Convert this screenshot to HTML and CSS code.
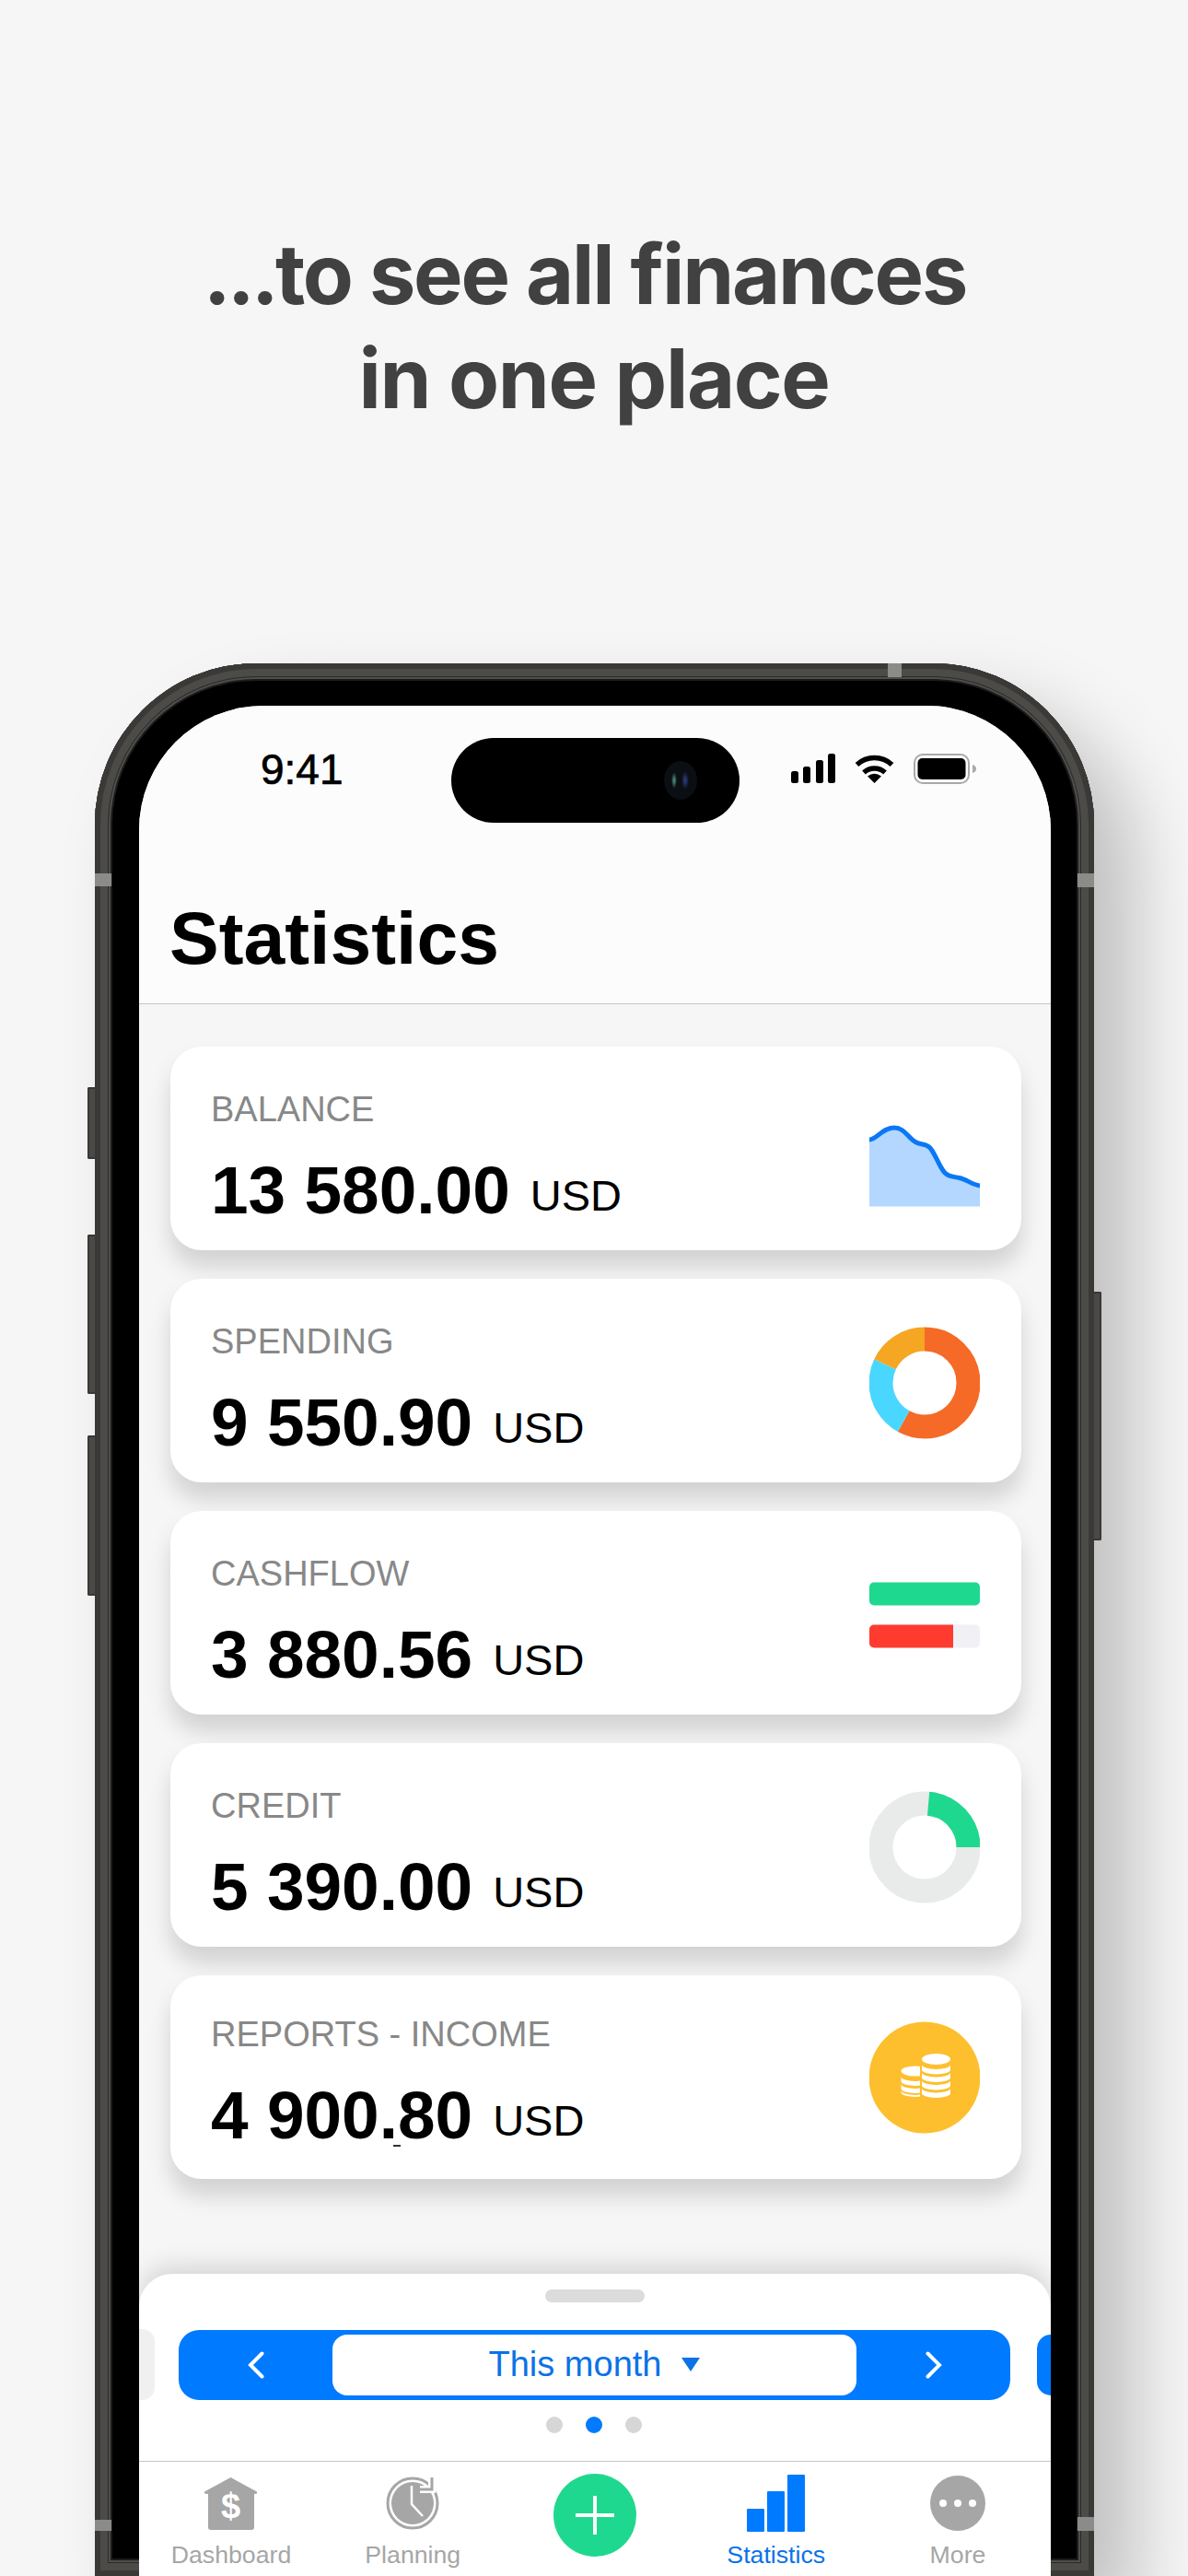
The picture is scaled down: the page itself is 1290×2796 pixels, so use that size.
FILE: index.html
```html
<!DOCTYPE html>
<html lang="en">
<head>
    <meta charset="UTF-8">
    <meta name="viewport" content="width=device-width, initial-scale=1.0">
    <title>Statistics</title>
    <link rel="stylesheet" href="styles.css">
</head>
<body>
    <h1 class="headline">
        <span class="line-one"><span class="lead-dots">...</span>to see all finances</span>
        <span class="line-two">in one place</span>
    </h1>

    <div class="phone">
        <span class="side-btn side-mute"></span>
        <span class="side-btn side-up"></span>
        <span class="side-btn side-down"></span>
        <span class="side-btn side-power"></span>
        <span class="mark mark-top"></span>
        <span class="mark mark-left"></span>
        <span class="mark mark-right"></span>
        <span class="mark mark-left-low"></span>
        <span class="mark mark-right-low"></span>

        <div class="screen">
            <div class="island"><span class="camera"></span></div>

            <header class="top">
                <div class="status">
                    <span class="time">9:41</span>
                    <div class="status-icons">
                        <svg width="48" height="32" viewBox="0 0 48 32">
                            <rect x="0" y="19" width="8" height="13" rx="2.5"/>
                            <rect x="13" y="14" width="8" height="18" rx="2.5"/>
                            <rect x="27" y="7" width="8" height="25" rx="2.5"/>
                            <rect x="40" y="0" width="8" height="32" rx="2.5"/>
                        </svg>
                        <svg width="43" height="32" viewBox="0 0 43 32">
                            <path class="wifi-arc" d="M2.500 12A28 28 0 0 1 40.500 12"/>
                            <path class="wifi-arc" d="M10 20.500A17 17 0 0 1 33 20.500"/>
                            <path d="M21.500 32L14 24.500Q21.500 19 29 24.500Z"/>
                        </svg>
                        <svg width="68" height="33" viewBox="0 0 68 33">
                            <rect class="batt-shell" x="1" y="1" width="59" height="31" rx="9"/>
                            <rect x="4.500" y="5" width="52" height="23" rx="5"/>
                            <path class="batt-nub" d="M64 12q4 1 4 4.500t-4 4.500z"/>
                        </svg>
                    </div>
                </div>
                <h2 class="title">Statistics</h2>
            </header>

            <main class="cards">
                <section class="card">
                    <div class="card-text">
                        <div class="card-label">BALANCE</div>
                        <div class="card-value">13 580.00<span class="cur">USD</span></div>
                    </div>
                    <svg class="card-icon" viewBox="0 0 120 128">
                        <path class="area" d="M0 54C8 54 14 41 27 41C38 41 42 52 50 56.500C56 60 62 58 66 63C72 70 76 84 82 90C87 95 92 94 98 95.500C105 97 112 103 120 104V126.500H0Z"/>
                        <path class="area-line" d="M0 54C8 54 14 41 27 41C38 41 42 52 50 56.500C56 60 62 58 66 63C72 70 76 84 82 90C87 95 92 94 98 95.500C105 97 112 103 120 104"/>
                    </svg>
                </section>

                <section class="card">
                    <div class="card-text">
                        <div class="card-label">SPENDING</div>
                        <div class="card-value">9 550.90<span class="cur">USD</span></div>
                    </div>
                    <svg class="card-icon" viewBox="0 0 120 128">
                        <g transform="rotate(-90 60 66)">
                            <circle class="ring ring-orange" cx="60" cy="66" r="47.500" pathLength="100" stroke-dasharray="58 42"/>
                            <circle class="ring ring-cyan" cx="60" cy="66" r="47.500" pathLength="100" stroke-dasharray="24 76" stroke-dashoffset="-58"/>
                            <circle class="ring ring-amber" cx="60" cy="66" r="47.500" pathLength="100" stroke-dasharray="18 82" stroke-dashoffset="-82"/>
                        </g>
                    </svg>
                </section>

                <section class="card">
                    <div class="card-text">
                        <div class="card-label">CASHFLOW</div>
                        <div class="card-value">3 880.56<span class="cur">USD</span></div>
                    </div>
                    <svg class="card-icon" viewBox="0 0 120 128">
                        <rect class="bar-green" x="0" y="30.500" width="120" height="25" rx="5"/>
                        <rect class="bar-track" x="0" y="76.500" width="120" height="25" rx="5"/>
                        <path class="bar-red" d="M5 76.500H91V101.500H5a5 5 0 0 1-5-5V81.500a5 5 0 0 1 5-5z"/>
                    </svg>
                </section>

                <section class="card">
                    <div class="card-text">
                        <div class="card-label">CREDIT</div>
                        <div class="card-value">5 390.00<span class="cur">USD</span></div>
                    </div>
                    <svg class="card-icon" viewBox="0 0 120 128">
                        <g transform="rotate(-90 60 66)">
                            <circle class="ring ring-grey" cx="60" cy="66" r="47.500"/>
                            <circle class="ring ring-green" cx="60" cy="66" r="47.500" pathLength="100" stroke-dasharray="23.600 76.400" stroke-dashoffset="-1.400"/>
                        </g>
                    </svg>
                </section>

                <section class="card card-report">
                    <div class="card-text">
                        <div class="card-label">REPORTS - INCOME</div>
                        <div class="card-value">4 900.80<span class="cur">USD</span></div>
                    </div>
                    <span class="tick"></span>
                    <svg class="card-icon" viewBox="0 0 120 128">
                        <circle class="coin-bg" cx="60" cy="64" r="60.500"/>
                        <g class="coin">
                            <ellipse cx="50" cy="57" rx="15.500" ry="5.500"/>
                            <path d="M34.500 63a15.500 5 0 0 0 31 0v5a15.500 5 0 0 1-31 0z"/>
                            <path d="M34.500 71a15.500 5 0 0 0 31 0v5a15.500 5 0 0 1-31 0z"/>
                            <path d="M34.500 78a15.500 5 0 0 0 31 0v2a15.500 5 0 0 1-31 0z"/>
                        </g>
                        <rect class="coin-bg" x="55" y="38" width="36" height="52"/>
                        <g class="coin">
                            <ellipse cx="72.500" cy="44" rx="15.500" ry="6"/>
                            <path d="M57 50a15.500 5 0 0 0 31 0v5.500a15.500 5 0 0 1-31 0z"/>
                            <path d="M57 58.500a15.500 5 0 0 0 31 0v5.500a15.500 5 0 0 1-31 0z"/>
                            <path d="M57 67a15.500 5 0 0 0 31 0v5.500a15.500 5 0 0 1-31 0z"/>
                            <path d="M57 75.500a15.500 5 0 0 0 31 0v5.500a15.500 5 0 0 1-31 0z"/>
                        </g>
                    </svg>
                </section>
            </main>

            <div class="panel">
                <div class="grabber"></div>
                <div class="period-row">
                    <span class="period-prev"></span>
                    <div class="period">
                        <button class="period-arrow">
                            <svg width="18" height="30" viewBox="0 0 18 30"><path d="M15.500 2.500L3 15L15.500 27.500"/></svg>
                        </button>
                        <div class="period-name">This month<span class="caret"></span></div>
                        <button class="period-arrow">
                            <svg width="18" height="30" viewBox="0 0 18 30"><path d="M2.500 2.500L15 15L2.500 27.500"/></svg>
                        </button>
                    </div>
                    <span class="period-next"></span>
                </div>
                <div class="dots">
                    <span class="dot"></span>
                    <span class="dot dot-on"></span>
                    <span class="dot"></span>
                </div>

                <nav class="tabs">
                    <a class="tab" href="#">
                        <svg class="tab-icon" width="60" height="62" viewBox="0 0 60 62">
                            <path class="grey-fill" d="M29.500 3L58 18.500V20.500L55 21V57a3 3 0 0 1-3 3H8a3 3 0 0 1-3-3V21L1 20.500V18.500Z"/>
                            <text class="dollar" x="29.500" y="47" text-anchor="middle">$</text>
                        </svg>
                        <span>Dashboard</span>
                    </a>
                    <a class="tab" href="#">
                        <svg class="tab-icon" width="60" height="62" viewBox="0 0 60 62">
                            <circle class="clock-ring" cx="30" cy="31" r="27"/>
                            <circle class="grey-fill" cx="30" cy="31" r="23"/>
                            <path class="clock-hand" d="M29 12V32L41 45"/>
                            <path class="clock-gap" d="M38 16H51V3"/>
                            <path class="clock-arrow" d="M38 16H51V3"/>
                        </svg>
                        <span>Planning</span>
                    </a>
                    <a class="tab" href="#">
                        <span class="add">
                            <svg width="42" height="42" viewBox="0 0 42 42"><path d="M21 0V42M0 21H42"/></svg>
                        </span>
                    </a>
                    <a class="tab tab-on" href="#">
                        <svg class="tab-icon" width="63" height="62" viewBox="0 0 63 62">
                            <rect x="0" y="37" width="19" height="25" rx="1"/>
                            <rect x="22" y="18" width="19" height="44" rx="1"/>
                            <rect x="44" y="0" width="19" height="62" rx="1"/>
                        </svg>
                        <span>Statistics</span>
                    </a>
                    <a class="tab" href="#">
                        <svg class="tab-icon" width="60" height="62" viewBox="0 0 60 62">
                            <circle class="grey-fill" cx="30" cy="31" r="30"/>
                            <circle class="more-dot" cx="14" cy="31" r="4"/>
                            <circle class="more-dot" cx="30" cy="31" r="4"/>
                            <circle class="more-dot" cx="46" cy="31" r="4"/>
                        </svg>
                        <span>More</span>
                    </a>
                </nav>
            </div>
        </div>
    </div>
</body>
</html>
```

FILE: styles.css
```css
* {
    box-sizing: border-box;
}
html, body {
    margin: 0;
    height: 2796px;
    overflow: hidden;
}
body {
    background: #f6f6f6;
    font-family: "Liberation Sans", Arial, sans-serif;
    padding-top: 241px;
}
.headline {
    margin: 0;
    text-align: center;
    font-family: Inter, "Liberation Sans", sans-serif;
    font-size: 90px;
    font-weight: 700;
    line-height: 113px;
    color: #414141;
}
.line-one {
    display: block;
    padding-right: 20px;
    letter-spacing: -2.200px;
}
.line-two {
    display: block;
    letter-spacing: -1.400px;
}
.lead-dots {
    letter-spacing: -4px;
}

/* phone body */
.phone {
    position: relative;
    width: 1085px;
    height: 2076px;
    margin: 253px 0 0 103px;
    padding: 46px 47px 0 48px;
    background: #000;
    border-radius: 175px 175px 0 0;
    box-shadow:
        inset 0 0 0 6px #3a3937,
        inset 0 0 0 14px #4c4b48,
        inset 0 0 0 15px #2a2a2a,
        inset 0 0 0 17px #4e4e4c,
        inset 0 0 0 19px #1c1c1c,
        45px 45px 80px rgba(0, 0, 0, 0.22);
}
.side-btn {
    position: absolute;
    width: 8px;
    background: #4a4947;
    border: 2px solid #393836;
    border-right: none;
    border-radius: 2px 0 0 2px;
}
.side-mute { left: -8px; top: 460px; height: 78px; }
.side-up { left: -8px; top: 620px; height: 173px; }
.side-down { left: -8px; top: 838px; height: 174px; }
.side-power {
    right: -8px;
    top: 682px;
    height: 270px;
    border: 2px solid #393836;
    border-left: none;
    border-radius: 0 2px 2px 0;
}
.mark {
    position: absolute;
    background: #8b8b89;
}
.mark-top { left: 861px; top: 0; width: 15px; height: 15px; }
.mark-left { left: 0; top: 228px; width: 18px; height: 14px; }
.mark-right { right: 0; top: 228px; width: 18px; height: 15px; }
.mark-left-low { left: 0; top: 2015px; width: 18px; height: 12px; }
.mark-right-low { right: 0; top: 2012px; width: 18px; height: 15px; }

.screen {
    position: relative;
    display: flex;
    flex-direction: column;
    height: 2030px;
    background: #f6f6f6;
    border-radius: 135px 135px 0 0;
    overflow: hidden;
}
.island {
    position: absolute;
    left: 339px;
    top: 35px;
    width: 313px;
    height: 92px;
    display: flex;
    align-items: center;
    justify-content: flex-end;
    padding-right: 46px;
    background: #000;
    border-radius: 46px;
}
.camera {
    width: 36px;
    height: 42px;
    border-radius: 50%;
    background:
        radial-gradient(ellipse 3px 9px at 11px 21px, #4f9f8f, transparent),
        radial-gradient(ellipse 4px 10px at 23px 21px, #2b418a, transparent),
        #0b0e12;
}

/* status bar and title */
.top {
    height: 324px;
    flex: none;
    background: #fcfcfc;
    border-bottom: 1px solid #c6c6c6;
}
.status {
    display: flex;
    justify-content: space-between;
    align-items: flex-start;
    height: 212px;
    padding: 46px 81px 0 132px;
}
.time {
    font-size: 46px;
    line-height: 1;
    color: #000;
    -webkit-text-stroke: 0.7px #000;
}
.status-icons {
    display: flex;
    align-items: flex-start;
    gap: 21px;
    margin-top: 6px;
}
.wifi-arc {
    fill: none;
    stroke: #000;
    stroke-width: 5.500;
}
.batt-shell {
    fill: none;
    stroke: #a9a9a9;
    stroke-width: 2;
}
.batt-nub {
    fill: #a9a9a9;
}
.title {
    margin: 0;
    padding-left: 33px;
    font-size: 80.500px;
    line-height: 1;
    font-weight: 700;
    color: #000;
}

/* cards */
.cards {
    flex: none;
    height: 1378px;
    display: flex;
    flex-direction: column;
    gap: 31px;
    padding: 46px 32px 0 34px;
}
.card {
    position: relative;
    display: flex;
    justify-content: space-between;
    align-items: center;
    height: 221px;
    padding: 0 45px 0 44px;
    background: #fff;
    border-radius: 34px;
    box-shadow: 0 18px 24px rgba(0, 0, 0, 0.15);
}
.card-text {
    align-self: flex-start;
    padding-top: 49px;
}
.card-report .card-text {
    padding-top: 45px;
}
.card-label {
    font-size: 38px;
    line-height: 1;
    color: #888;
}
.card-value {
    margin-top: 32px;
    font-size: 73px;
    line-height: 1;
    font-weight: 700;
    color: #000;
}
.cur {
    margin-left: 22px;
    font-size: 47px;
    line-height: 1;
    font-weight: 400;
    vertical-align: 3px;
}
.tick {
    position: absolute;
    left: 242px;
    top: 184px;
    width: 8px;
    height: 2px;
    background: #333;
}
.card-icon {
    width: 120px;
    height: 128px;
    flex: none;
}
.area {
    fill: #b3d7ff;
}
.area-line {
    fill: none;
    stroke: #0a78f5;
    stroke-width: 5;
}
.ring {
    fill: none;
    stroke-width: 26;
}
.ring-orange { stroke: #f56a27; }
.ring-cyan { stroke: #4ad7ff; }
.ring-amber { stroke: #f5a623; }
.ring-grey { stroke: #e9eaea; }
.ring-green { stroke: #1fd88f; }
.bar-green { fill: #1fd88f; }
.bar-track { fill: #f0f0f5; }
.bar-red { fill: #ff3b30; }
.coin-bg { fill: #fdbf2d; }
.coin { fill: #fff; }

/* bottom sheet */
.panel {
    flex: 1;
    display: flex;
    flex-direction: column;
    background: #fff;
    border-radius: 36px 36px 0 0;
    box-shadow: 0 -10px 24px rgba(0, 0, 0, 0.12);
}
.grabber {
    width: 108px;
    height: 14px;
    margin: 17px auto 0;
    background: #dcdcdc;
    border-radius: 7px;
}
.period-row {
    display: flex;
    align-items: center;
    gap: 26px;
    margin-top: 29px;
}
.period-prev {
    width: 17px;
    height: 77px;
    background: #f0f0f0;
    border-radius: 0 14px 14px 0;
}
.period-next {
    width: 15px;
    height: 66px;
    margin-left: auto;
    background: #007aff;
    border-radius: 16px 0 0 16px;
}
.period {
    display: flex;
    width: 903px;
    height: 76px;
    padding: 5px 0;
    background: #007aff;
    border-radius: 22px;
}
.period-arrow {
    flex: 1;
    display: flex;
    align-items: center;
    justify-content: center;
    padding: 0;
    background: none;
    border: none;
}
.period-arrow path {
    fill: none;
    stroke: #fff;
    stroke-width: 4;
    stroke-linecap: round;
}
.period-name {
    width: 569px;
    display: flex;
    align-items: center;
    justify-content: center;
    background: #fff;
    border-radius: 16px;
    font-size: 38px;
    color: #0b72e7;
}
.caret {
    width: 0;
    height: 0;
    margin-left: 22px;
    border-left: 10px solid transparent;
    border-right: 10px solid transparent;
    border-top: 15px solid #0b72e7;
}
.dots {
    display: flex;
    justify-content: center;
    gap: 25px;
    margin-top: 18px;
    padding-right: 3px;
}
.dot {
    width: 18px;
    height: 18px;
    border-radius: 50%;
    background: #d6d6d6;
}
.dot-on {
    background: #007aff;
}

/* tab bar */
.tabs {
    display: flex;
    justify-content: space-between;
    margin-top: 30px;
    padding: 14px 36px 0 35px;
    border-top: 1px solid #c6c6c6;
}
.tab {
    display: flex;
    flex-direction: column;
    align-items: center;
    width: 130px;
    font-size: 26.700px;
    line-height: 1;
    color: #a6a6a6;
    text-decoration: none;
}
.tab-icon {
    display: block;
    margin-bottom: 12px;
}
.tab-on {
    color: #0b72e7;
}
.tab-on rect {
    fill: #007aff;
}
.grey-fill {
    fill: #a6a6a6;
}
.dollar {
    font-family: "Liberation Sans", sans-serif;
    font-size: 38px;
    font-weight: 700;
    fill: #fff;
}
.clock-ring {
    fill: none;
    stroke: #a6a6a6;
    stroke-width: 3;
}
.clock-hand {
    fill: none;
    stroke: #fff;
    stroke-width: 2.500;
}
.clock-gap {
    fill: none;
    stroke: #fff;
    stroke-width: 8;
}
.clock-arrow {
    fill: none;
    stroke: #a6a6a6;
    stroke-width: 3;
}
.more-dot {
    fill: #fff;
}
.add {
    display: flex;
    align-items: center;
    justify-content: center;
    width: 90px;
    height: 90px;
    margin-top: -1px;
    background: #1fd88f;
    border-radius: 50%;
}
.add path {
    fill: none;
    stroke: #fff;
    stroke-width: 4;
}
```
